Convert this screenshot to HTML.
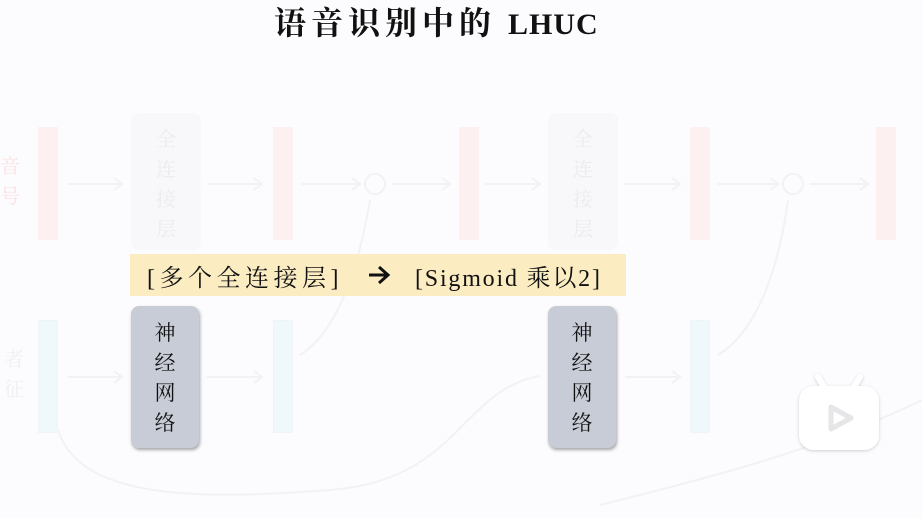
<!DOCTYPE html>
<html><head><meta charset="utf-8"><style>
body{margin:0;width:922px;height:518px;background:#fcfbfd;position:relative;overflow:hidden;font-family:"Liberation Serif","Noto Serif CJK SC",serif}
.a{position:absolute;white-space:nowrap}
.rb{position:absolute;width:20px;height:113px;background:#fcf0f0}
.bb{position:absolute;width:20px;height:113px;background:#eff8fb;border:1px solid #f1f4f6;box-sizing:border-box}
.fc{position:absolute;width:70px;height:137px;background:#f8f7f9;border-radius:8px;color:#ecebee;font-size:20px;text-align:center;line-height:30px;padding-top:12px;box-sizing:border-box}
.nn{position:absolute;width:68px;height:142px;background:#c8ccd6;border-radius:8px;box-shadow:1px 2px 3px rgba(0,0,0,.35);color:#111;font-size:21px;text-align:center;line-height:30px;padding-top:12px;box-sizing:border-box}
</style></head><body>
<div class="a" style="left:274px;top:5px;font-size:32px;line-height:36px;font-weight:bold;color:#111;letter-spacing:5px">语音识别中的</div>
<div class="a" style="left:508px;top:5px;font-size:30px;line-height:40px;font-weight:bold;color:#111;letter-spacing:1px">LHUC</div>
<svg class="a" style="left:0;top:0" width="922" height="518">
<g stroke="#f2f1f4" stroke-width="2" fill="none">
<path d="M68 184H122M114 178l8 6-8 6"/><path d="M207 184H262M254 178l8 6-8 6"/><path d="M302 184H360M352 178l8 6-8 6"/><path d="M392 184H450M442 178l8 6-8 6"/>
<path d="M485 184H540M532 178l8 6-8 6"/><path d="M625 184H680M672 178l8 6-8 6"/><path d="M718 184H778M770 178l8 6-8 6"/><path d="M810 184H868M860 178l8 6-8 6"/>
<path d="M68 377H122M114 371l8 6-8 6"/><path d="M207 377H262M254 371l8 6-8 6"/><path d="M625 377H680M672 371l8 6-8 6"/>
<circle cx="375" cy="184" r="10"/><circle cx="793" cy="184" r="10"/>
<path d="M300 355C340 330 360 260 370 200"/><path d="M718 355C760 330 780 260 788 200"/>
<path d="M58 430C80 500 200 500 330 490S460 390 540 376"/>
<path d="M600 505C700 480 820 450 922 400"/>
</g></svg>
<div class="rb" style="left:38px;top:127px"></div><div class="rb" style="left:273px;top:127px"></div><div class="rb" style="left:459px;top:127px"></div><div class="rb" style="left:690px;top:127px"></div><div class="rb" style="left:876px;top:127px"></div>
<div class="bb" style="left:38px;top:320px"></div><div class="bb" style="left:273px;top:320px"></div><div class="bb" style="left:690px;top:320px"></div>
<div class="a" style="left:0;top:152px;color:#fae2e2;font-size:20px;line-height:30px">音<br>号</div>
<div class="a" style="left:4px;top:345px;color:#efeff1;font-size:20px;line-height:30px">者<br>征</div>
<div class="fc" style="left:131px;top:113px">全<br>连<br>接<br>层</div>
<div class="fc" style="left:548px;top:113px">全<br>连<br>接<br>层</div>
<div class="a" style="left:130px;top:254px;width:496px;height:42px;background:#fbecc2"></div>
<div class="a" style="left:147px;top:258px;font-size:24px;color:#111;letter-spacing:4.5px">[多个全连接层]</div>
<svg class="a" style="left:366px;top:264px" width="26" height="22"><path d="M3 11H22M13 3l9 8-9 8" stroke="#111" stroke-width="3" fill="none"/></svg>
<div class="a" style="left:415px;top:258px;font-size:24px;color:#111;letter-spacing:1.8px">[Sigmoid 乘以2]</div>
<div class="nn" style="left:131px;top:306px">神<br>经<br>网<br>络</div>
<div class="nn" style="left:548px;top:306px">神<br>经<br>网<br>络</div>
<svg class="a" style="left:794px;top:370px" width="92" height="86">
<defs><filter id="s" x="-20%" y="-20%" width="140%" height="140%"><feDropShadow dx="0" dy="1" stdDeviation="1.5" flood-color="#000" flood-opacity=".18"/></filter></defs>
<g filter="url(#s)">
<path d="M30 17L24 7M60 17L66 7" stroke="#fff" stroke-width="6" stroke-linecap="round"/>
<rect x="5" y="16" width="80" height="64" rx="15" fill="#fff"/>
</g>
<path d="M37 37L37 59L57 48Z" fill="none" stroke="#e6e6e8" stroke-width="5" stroke-linejoin="round"/>
</svg>
</body></html>
